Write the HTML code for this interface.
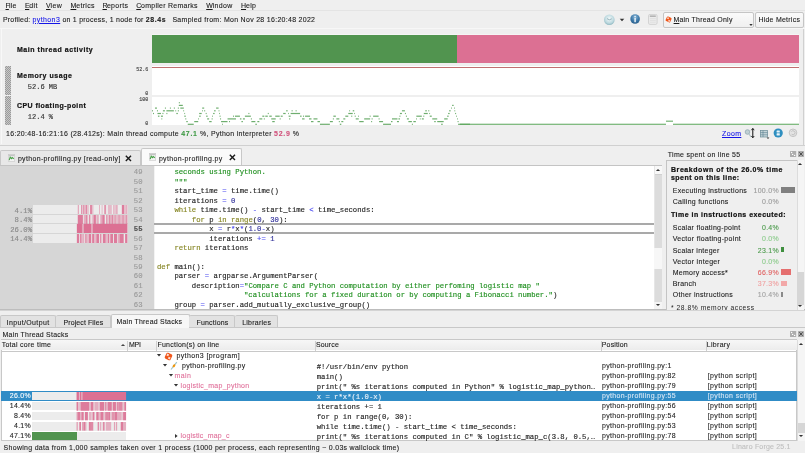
<!DOCTYPE html>
<html><head><meta charset="utf-8"><style>
html,body{margin:0;padding:0;width:805px;height:453px;overflow:hidden;background:#efefef;position:relative;font-family:'Liberation Sans', sans-serif}
div{font-variant-ligatures:none;text-decoration-thickness:0.7px;text-underline-offset:0.6px}
.m{-webkit-text-stroke:0.14px currentColor}
.s{-webkit-text-stroke:0.1px currentColor}
.b{-webkit-text-stroke:0.22px currentColor}
</style></head><body><div id="root" style="position:absolute;left:0;top:0;width:805px;height:453px;will-change:transform">
<div style="position:absolute;left:0px;top:10px;width:805px;height:1px;background:#e4e4e4;"></div>
<div class="s" style="position:absolute;left:5.50px;top:2.88px;font-family:'Liberation Sans', sans-serif;font-size:6.97px;line-height:6.97px;font-weight:400;color:#1a1a1a;white-space:pre;"><span style="text-decoration:underline;letter-spacing:-0.891px;">F</span><span style=";letter-spacing:0.292px;">ile</span></div>
<div class="s" style="position:absolute;left:25.00px;top:2.88px;font-family:'Liberation Sans', sans-serif;font-size:6.97px;line-height:6.97px;font-weight:400;color:#1a1a1a;white-space:pre;"><span style="text-decoration:underline;letter-spacing:-0.406px;">E</span><span style=";letter-spacing:0.464px;">dit</span></div>
<div class="s" style="position:absolute;left:46.00px;top:2.88px;font-family:'Liberation Sans', sans-serif;font-size:6.97px;line-height:6.97px;font-weight:400;color:#1a1a1a;white-space:pre;"><span style="text-decoration:underline;letter-spacing:-0.078px;">V</span><span style=";letter-spacing:0.339px;">iew</span></div>
<div class="s" style="position:absolute;left:70.50px;top:2.88px;font-family:'Liberation Sans', sans-serif;font-size:6.97px;line-height:6.97px;font-weight:400;color:#1a1a1a;white-space:pre;"><span style="text-decoration:underline;letter-spacing:-0.016px;">M</span><span style=";letter-spacing:0.315px;">etrics</span></div>
<div class="s" style="position:absolute;left:102.50px;top:2.88px;font-family:'Liberation Sans', sans-serif;font-size:6.97px;line-height:6.97px;font-weight:400;color:#1a1a1a;white-space:pre;"><span style="text-decoration:underline;letter-spacing:-0.672px;">R</span><span style=";letter-spacing:0.331px;">eports</span></div>
<div class="s" style="position:absolute;left:136.30px;top:2.88px;font-family:'Liberation Sans', sans-serif;font-size:6.97px;line-height:6.97px;font-weight:400;color:#1a1a1a;white-space:pre;"><span style="text-decoration:underline;letter-spacing:-0.359px;">C</span><span style=";letter-spacing:0.280px;">ompiler Remarks</span></div>
<div class="s" style="position:absolute;left:206.20px;top:2.88px;font-family:'Liberation Sans', sans-serif;font-size:6.97px;line-height:6.97px;font-weight:400;color:#1a1a1a;white-space:pre;"><span style="text-decoration:underline;letter-spacing:-0.109px;">W</span><span style=";letter-spacing:0.347px;">indow</span></div>
<div class="s" style="position:absolute;left:241.00px;top:2.88px;font-family:'Liberation Sans', sans-serif;font-size:6.97px;line-height:6.97px;font-weight:400;color:#1a1a1a;white-space:pre;"><span style="text-decoration:underline;">H</span><span style=";letter-spacing:0.312px;">elp</span></div>
<div class="s" style="position:absolute;left:3.00px;top:16.78px;font-family:'Liberation Sans', sans-serif;font-size:6.97px;line-height:6.97px;font-weight:400;color:#1a1a1a;white-space:pre;"><span style=";letter-spacing:0.197px;">Profiled: </span><span style="color:#1515e8;text-decoration:underline;letter-spacing:0.415px;">python3</span><span style=";letter-spacing:0.253px;"> on 1 process, 1 node for </span><span style="font-weight:700;letter-spacing:0.616px;">28.4s</span></div>
<div class="s" style="position:absolute;left:172.40px;top:16.78px;font-family:'Liberation Sans', sans-serif;font-size:6.97px;line-height:6.97px;font-weight:400;color:#1a1a1a;white-space:pre;"><span style=";letter-spacing:0.305px;">Sampled from: Mon Nov 28 16:20:48 2022</span></div>
<svg style="position:absolute;left:603px;top:13.5px" width="13" height="12"><defs><radialGradient id="cg" cx="50%" cy="40%" r="60%"><stop offset="0" stop-color="#f4fafb"/><stop offset="0.7" stop-color="#bcd8de"/><stop offset="1" stop-color="#8ab4be"/></radialGradient></defs><circle cx="6.3" cy="5.8" r="5.3" fill="url(#cg)"/><path d="M6.3,5.8 L4,4.6 M6.3,5.8 L8.8,4.8" stroke="#7a9aa4" stroke-width="0.7" fill="none"/></svg>
<svg style="position:absolute;left:617.6px;top:16.6px" width="8" height="6"><polygon points="1.7000000000000002,1.8 6.3,1.8 4,4.2" fill="#333"/></svg>
<svg style="position:absolute;left:629.5px;top:14px" width="11" height="11"><defs><radialGradient id="ig" cx="50%" cy="30%" r="70%"><stop offset="0" stop-color="#8cb8d8"/><stop offset="0.6" stop-color="#3c78a8"/><stop offset="1" stop-color="#2a5f8c"/></radialGradient></defs><circle cx="5.1" cy="5" r="4.8" fill="url(#ig)"/><circle cx="5.1" cy="2.6" r="0.8" fill="#f4f8fb"/><rect x="4.4" y="4" width="1.4" height="4.2" fill="#f4f8fb"/></svg>
<svg style="position:absolute;left:648px;top:14px" width="10" height="11"><rect x="0.5" y="0.4" width="8.6" height="10" rx="1.4" fill="#ececec" stroke="#c8c8c8" stroke-width="0.7"/><rect x="1.8" y="1.4" width="6" height="1.6" fill="#b4b4b4"/><path d="M1.8,4.6 L7.8,4.6 M1.8,6.4 L7.8,6.4 M1.8,8.2 L7.8,8.2" stroke="#d6d6d6" stroke-width="0.6"/></svg>
<div style="position:absolute;left:662.5px;top:12px;width:91px;height:16.3px;box-sizing:border-box;border:1px solid #c5c5c5;border-radius:2px;background:linear-gradient(#fafafa,#f0f0f0)"></div>
<svg style="position:absolute;left:664.6px;top:16.4px" width="8" height="8"><g transform="rotate(25 3.6 3.6)"><rect x="1" y="1" width="5" height="5" rx="1" fill="#f0561a"/><rect x="1.7" y="1.8" width="1.6" height="1.6" fill="#fbe0d6"/><rect x="3.8" y="3.7" width="1.6" height="1.6" fill="#fbe0d6"/></g></svg>
<div class="s" style="position:absolute;left:673.60px;top:17.38px;font-family:'Liberation Sans', sans-serif;font-size:6.97px;line-height:6.97px;font-weight:400;color:#1a1a1a;white-space:pre;"><span style="text-decoration:underline;letter-spacing:-0.016px;">M</span><span style=";letter-spacing:0.253px;">ain Thread Only</span></div>
<svg style="position:absolute;left:747.3px;top:22.2px" width="8" height="6"><polygon points="2.3,2.1 5.7,2.1 4,3.9" fill="#333"/></svg>
<div style="position:absolute;left:754.7px;top:12px;width:49.3px;height:16.3px;box-sizing:border-box;border:1px solid #c5c5c5;border-radius:2px;background:linear-gradient(#fafafa,#f0f0f0)"></div>
<div class="s" style="position:absolute;left:758.40px;top:17.38px;font-family:'Liberation Sans', sans-serif;font-size:6.97px;line-height:6.97px;font-weight:400;color:#1a1a1a;white-space:pre;"><span style=";letter-spacing:0.251px;">Hide Metrics</span></div>
<div style="position:absolute;left:0px;top:28px;width:805px;height:1px;background:#f7f7f7;"></div>
<div style="position:absolute;left:803px;top:29px;width:1px;height:116px;background:#d0d0d0;"></div>
<div style="position:absolute;left:1px;top:29px;width:1px;height:115px;background:#f8f8f8;"></div>
<div style="position:absolute;left:0px;top:144.6px;width:805px;height:1.2px;background:#d0d0d0;"></div>
<div class="b" style="position:absolute;left:17.00px;top:46.58px;font-family:'Liberation Sans', sans-serif;font-size:6.97px;line-height:6.97px;font-weight:700;color:#141414;white-space:pre;"><span style=";letter-spacing:0.562px;">Main thread activity</span></div>
<div style="position:absolute;left:152px;top:34px;width:647px;height:1px;background:#f5f5f5;"></div>
<div style="position:absolute;left:152px;top:35px;width:305px;height:28px;background:#51944f;"></div>
<div style="position:absolute;left:457px;top:35px;width:342px;height:28px;background:#dc7093;"></div>
<div style="position:absolute;left:5.4px;top:65.8px;width:5.6px;height:29px;background:#aaa;background:repeating-linear-gradient(45deg,#9a9a9a 0 0.7px,#c8c8c8 0.7px 1.4px)"></div>
<div style="position:absolute;left:5.4px;top:96.3px;width:5.6px;height:28.8px;background:#aaa;background:repeating-linear-gradient(45deg,#9a9a9a 0 0.7px,#c8c8c8 0.7px 1.4px)"></div>
<div class="b" style="position:absolute;left:17.00px;top:72.88px;font-family:'Liberation Sans', sans-serif;font-size:6.97px;line-height:6.97px;font-weight:700;color:#141414;white-space:pre;"><span style=";letter-spacing:0.552px;">Memory usage</span></div>
<div class="m" style="position:absolute;left:27.80px;top:84.38px;font-family:'Liberation Mono', monospace;font-size:7.00px;line-height:7.00px;font-weight:400;color:#333;white-space:pre;">52.6 MB</div>
<div class="b" style="position:absolute;left:17.00px;top:102.68px;font-family:'Liberation Sans', sans-serif;font-size:6.97px;line-height:6.97px;font-weight:700;color:#141414;white-space:pre;"><span style=";letter-spacing:0.447px;">CPU floating-point</span></div>
<div class="m" style="position:absolute;left:27.80px;top:114.18px;font-family:'Liberation Mono', monospace;font-size:7.00px;line-height:7.00px;font-weight:400;color:#333;white-space:pre;">12.4 %</div>
<div style="position:absolute;left:152px;top:66px;width:647px;height:29px;background:#fff;"></div>
<div style="position:absolute;left:152px;top:67px;width:647px;height:1px;background:#c07070;"></div>
<div style="position:absolute;left:152px;top:97px;width:647px;height:28px;background:#fff;"></div>
<div class="m" style="position:absolute;right:656.70px;top:68.00px;font-family:'Liberation Mono', monospace;font-size:5.00px;line-height:5.00px;font-weight:400;color:#444;white-space:pre;">52.6</div>
<div class="m" style="position:absolute;right:656.70px;top:91.50px;font-family:'Liberation Mono', monospace;font-size:5.00px;line-height:5.00px;font-weight:400;color:#444;white-space:pre;">0</div>
<div class="m" style="position:absolute;right:656.70px;top:98.20px;font-family:'Liberation Mono', monospace;font-size:5.00px;line-height:5.00px;font-weight:400;color:#444;white-space:pre;">100</div>
<div class="m" style="position:absolute;right:656.70px;top:121.80px;font-family:'Liberation Mono', monospace;font-size:5.00px;line-height:5.00px;font-weight:400;color:#444;white-space:pre;">0</div>
<svg style="position:absolute;left:0;top:0" width="805" height="453"><rect x="178.83" y="102.10" width="0.99" height="1.2" fill="#4a9a4a" fill-opacity="0.8"/><rect x="178.83" y="104.80" width="3.98" height="1.2" fill="#4a9a4a" fill-opacity="0.8"/><rect x="154.97" y="107.50" width="1.99" height="1.2" fill="#4a9a4a" fill-opacity="0.8"/><rect x="164.91" y="107.50" width="0.99" height="1.2" fill="#4a9a4a" fill-opacity="0.8"/><rect x="169.88" y="107.50" width="0.99" height="1.2" fill="#4a9a4a" fill-opacity="0.8"/><rect x="173.86" y="107.50" width="0.99" height="1.2" fill="#4a9a4a" fill-opacity="0.8"/><rect x="177.83" y="107.50" width="0.99" height="1.2" fill="#4a9a4a" fill-opacity="0.8"/><rect x="180.32" y="107.50" width="3.48" height="1.2" fill="#4a9a4a" fill-opacity="0.8"/><rect x="202.19" y="107.50" width="1.99" height="1.2" fill="#4a9a4a" fill-opacity="0.8"/><rect x="216.10" y="107.50" width="2.49" height="1.2" fill="#4a9a4a" fill-opacity="0.8"/><rect x="151.99" y="110.20" width="0.99" height="1.2" fill="#4a9a4a" fill-opacity="0.8"/><rect x="156.96" y="110.20" width="0.99" height="1.2" fill="#4a9a4a" fill-opacity="0.8"/><rect x="162.92" y="110.20" width="1.99" height="1.2" fill="#4a9a4a" fill-opacity="0.8"/><rect x="166.40" y="110.20" width="7.46" height="1.2" fill="#4a9a4a" fill-opacity="0.8"/><rect x="175.35" y="110.20" width="0.80" height="1.2" fill="#4a9a4a" fill-opacity="0.8"/><rect x="177.83" y="110.20" width="0.99" height="1.2" fill="#4a9a4a" fill-opacity="0.8"/><rect x="183.30" y="110.20" width="0.80" height="1.2" fill="#4a9a4a" fill-opacity="0.8"/><rect x="202.19" y="110.20" width="0.80" height="1.2" fill="#4a9a4a" fill-opacity="0.8"/><rect x="204.17" y="110.20" width="0.99" height="1.2" fill="#4a9a4a" fill-opacity="0.8"/><rect x="214.12" y="110.20" width="1.49" height="1.2" fill="#4a9a4a" fill-opacity="0.8"/><rect x="218.59" y="110.20" width="0.80" height="1.2" fill="#4a9a4a" fill-opacity="0.8"/><rect x="152.98" y="112.90" width="0.99" height="1.2" fill="#4a9a4a" fill-opacity="0.8"/><rect x="157.46" y="112.90" width="3.48" height="1.2" fill="#4a9a4a" fill-opacity="0.8"/><rect x="162.43" y="112.90" width="0.99" height="1.2" fill="#4a9a4a" fill-opacity="0.8"/><rect x="166.40" y="112.90" width="0.99" height="1.2" fill="#4a9a4a" fill-opacity="0.8"/><rect x="176.34" y="112.90" width="1.49" height="1.2" fill="#4a9a4a" fill-opacity="0.8"/><rect x="184.29" y="112.90" width="0.80" height="1.2" fill="#4a9a4a" fill-opacity="0.8"/><rect x="199.20" y="112.90" width="2.49" height="1.2" fill="#4a9a4a" fill-opacity="0.8"/><rect x="205.67" y="112.90" width="0.99" height="1.2" fill="#4a9a4a" fill-opacity="0.8"/><rect x="213.12" y="112.90" width="1.49" height="1.2" fill="#4a9a4a" fill-opacity="0.8"/><rect x="219.09" y="112.90" width="0.80" height="1.2" fill="#4a9a4a" fill-opacity="0.8"/><rect x="157.95" y="115.60" width="1.49" height="1.2" fill="#4a9a4a" fill-opacity="0.8"/><rect x="160.93" y="115.60" width="1.99" height="1.2" fill="#4a9a4a" fill-opacity="0.8"/><rect x="184.29" y="115.60" width="1.49" height="1.2" fill="#4a9a4a" fill-opacity="0.8"/><rect x="199.20" y="115.60" width="1.49" height="1.2" fill="#4a9a4a" fill-opacity="0.8"/><rect x="206.16" y="115.60" width="1.49" height="1.2" fill="#4a9a4a" fill-opacity="0.8"/><rect x="212.13" y="115.60" width="0.80" height="1.2" fill="#4a9a4a" fill-opacity="0.8"/><rect x="219.58" y="115.60" width="0.99" height="1.2" fill="#4a9a4a" fill-opacity="0.8"/><rect x="161.43" y="118.30" width="0.80" height="1.2" fill="#4a9a4a" fill-opacity="0.8"/><rect x="185.29" y="118.30" width="0.99" height="1.2" fill="#4a9a4a" fill-opacity="0.8"/><rect x="198.21" y="118.30" width="0.80" height="1.2" fill="#4a9a4a" fill-opacity="0.8"/><rect x="207.16" y="118.30" width="1.99" height="1.2" fill="#4a9a4a" fill-opacity="0.8"/><rect x="211.63" y="118.30" width="0.99" height="1.2" fill="#4a9a4a" fill-opacity="0.8"/><rect x="220.08" y="118.30" width="0.99" height="1.2" fill="#4a9a4a" fill-opacity="0.8"/><rect x="227.53" y="118.30" width="2.49" height="1.2" fill="#4a9a4a" fill-opacity="0.8"/><rect x="186.28" y="121.00" width="1.49" height="1.2" fill="#4a9a4a" fill-opacity="0.8"/><rect x="194.23" y="121.00" width="3.98" height="1.2" fill="#4a9a4a" fill-opacity="0.8"/><rect x="209.15" y="121.00" width="2.49" height="1.2" fill="#4a9a4a" fill-opacity="0.8"/><rect x="221.07" y="121.00" width="6.46" height="1.2" fill="#4a9a4a" fill-opacity="0.8"/><rect x="229.03" y="121.00" width="0.99" height="1.2" fill="#4a9a4a" fill-opacity="0.8"/><rect x="187.77" y="123.70" width="5.96" height="1.2" fill="#4a9a4a" fill-opacity="0.8"/><rect x="222.07" y="123.70" width="0.80" height="1.2" fill="#4a9a4a" fill-opacity="0.8"/><rect x="286.16" y="110.20" width="1.49" height="1.2" fill="#4a9a4a" fill-opacity="0.8"/><rect x="291.63" y="110.20" width="0.99" height="1.2" fill="#4a9a4a" fill-opacity="0.8"/><rect x="295.61" y="110.20" width="0.99" height="1.2" fill="#4a9a4a" fill-opacity="0.8"/><rect x="248.39" y="112.90" width="0.99" height="1.2" fill="#4a9a4a" fill-opacity="0.8"/><rect x="267.77" y="112.90" width="0.99" height="1.2" fill="#4a9a4a" fill-opacity="0.8"/><rect x="283.18" y="112.90" width="2.49" height="1.2" fill="#4a9a4a" fill-opacity="0.8"/><rect x="288.15" y="112.90" width="0.80" height="1.2" fill="#4a9a4a" fill-opacity="0.8"/><rect x="290.64" y="112.90" width="9.44" height="1.2" fill="#4a9a4a" fill-opacity="0.8"/><rect x="232.98" y="115.60" width="0.99" height="1.2" fill="#4a9a4a" fill-opacity="0.8"/><rect x="234.97" y="115.60" width="4.97" height="1.2" fill="#4a9a4a" fill-opacity="0.8"/><rect x="244.91" y="115.60" width="5.96" height="1.2" fill="#4a9a4a" fill-opacity="0.8"/><rect x="262.31" y="115.60" width="1.99" height="1.2" fill="#4a9a4a" fill-opacity="0.8"/><rect x="265.29" y="115.60" width="2.49" height="1.2" fill="#4a9a4a" fill-opacity="0.8"/><rect x="269.26" y="115.60" width="2.49" height="1.2" fill="#4a9a4a" fill-opacity="0.8"/><rect x="275.23" y="115.60" width="4.47" height="1.2" fill="#4a9a4a" fill-opacity="0.8"/><rect x="280.70" y="115.60" width="1.99" height="1.2" fill="#4a9a4a" fill-opacity="0.8"/><rect x="288.65" y="115.60" width="1.99" height="1.2" fill="#4a9a4a" fill-opacity="0.8"/><rect x="300.08" y="115.60" width="1.49" height="1.2" fill="#4a9a4a" fill-opacity="0.8"/><rect x="303.06" y="115.60" width="0.99" height="1.2" fill="#4a9a4a" fill-opacity="0.8"/><rect x="305.05" y="115.60" width="4.97" height="1.2" fill="#4a9a4a" fill-opacity="0.8"/><rect x="230.00" y="118.30" width="5.96" height="1.2" fill="#4a9a4a" fill-opacity="0.8"/><rect x="239.94" y="118.30" width="1.49" height="1.2" fill="#4a9a4a" fill-opacity="0.8"/><rect x="242.92" y="118.30" width="1.99" height="1.2" fill="#4a9a4a" fill-opacity="0.8"/><rect x="250.87" y="118.30" width="0.99" height="1.2" fill="#4a9a4a" fill-opacity="0.8"/><rect x="259.32" y="118.30" width="2.98" height="1.2" fill="#4a9a4a" fill-opacity="0.8"/><rect x="263.80" y="118.30" width="0.99" height="1.2" fill="#4a9a4a" fill-opacity="0.8"/><rect x="271.25" y="118.30" width="4.47" height="1.2" fill="#4a9a4a" fill-opacity="0.8"/><rect x="279.70" y="118.30" width="0.99" height="1.2" fill="#4a9a4a" fill-opacity="0.8"/><rect x="289.15" y="118.30" width="0.99" height="1.2" fill="#4a9a4a" fill-opacity="0.8"/><rect x="302.07" y="118.30" width="2.49" height="1.2" fill="#4a9a4a" fill-opacity="0.8"/><rect x="309.03" y="118.30" width="0.99" height="1.2" fill="#4a9a4a" fill-opacity="0.8"/><rect x="241.43" y="121.00" width="1.49" height="1.2" fill="#4a9a4a" fill-opacity="0.8"/><rect x="251.37" y="121.00" width="3.98" height="1.2" fill="#4a9a4a" fill-opacity="0.8"/><rect x="257.34" y="121.00" width="1.99" height="1.2" fill="#4a9a4a" fill-opacity="0.8"/><rect x="272.25" y="121.00" width="2.49" height="1.2" fill="#4a9a4a" fill-opacity="0.8"/><rect x="255.35" y="123.70" width="1.49" height="1.2" fill="#4a9a4a" fill-opacity="0.8"/><rect x="349.26" y="110.20" width="0.80" height="1.2" fill="#4a9a4a" fill-opacity="0.8"/><rect x="352.74" y="110.20" width="1.49" height="1.2" fill="#4a9a4a" fill-opacity="0.8"/><rect x="348.27" y="112.90" width="4.47" height="1.2" fill="#4a9a4a" fill-opacity="0.8"/><rect x="354.23" y="112.90" width="0.80" height="1.2" fill="#4a9a4a" fill-opacity="0.8"/><rect x="333.36" y="115.60" width="2.49" height="1.2" fill="#4a9a4a" fill-opacity="0.8"/><rect x="345.29" y="115.60" width="2.98" height="1.2" fill="#4a9a4a" fill-opacity="0.8"/><rect x="351.25" y="115.60" width="0.99" height="1.2" fill="#4a9a4a" fill-opacity="0.8"/><rect x="354.73" y="115.60" width="0.99" height="1.2" fill="#4a9a4a" fill-opacity="0.8"/><rect x="358.21" y="115.60" width="0.80" height="1.2" fill="#4a9a4a" fill-opacity="0.8"/><rect x="369.64" y="115.60" width="0.99" height="1.2" fill="#4a9a4a" fill-opacity="0.8"/><rect x="373.12" y="115.60" width="5.47" height="1.2" fill="#4a9a4a" fill-opacity="0.8"/><rect x="310.00" y="118.30" width="1.49" height="1.2" fill="#4a9a4a" fill-opacity="0.8"/><rect x="313.48" y="118.30" width="3.98" height="1.2" fill="#4a9a4a" fill-opacity="0.8"/><rect x="332.86" y="118.30" width="0.99" height="1.2" fill="#4a9a4a" fill-opacity="0.8"/><rect x="336.34" y="118.30" width="2.98" height="1.2" fill="#4a9a4a" fill-opacity="0.8"/><rect x="343.30" y="118.30" width="1.99" height="1.2" fill="#4a9a4a" fill-opacity="0.8"/><rect x="355.73" y="118.30" width="2.98" height="1.2" fill="#4a9a4a" fill-opacity="0.8"/><rect x="364.17" y="118.30" width="5.96" height="1.2" fill="#4a9a4a" fill-opacity="0.8"/><rect x="371.63" y="118.30" width="0.99" height="1.2" fill="#4a9a4a" fill-opacity="0.8"/><rect x="378.59" y="118.30" width="0.99" height="1.2" fill="#4a9a4a" fill-opacity="0.8"/><rect x="310.99" y="121.00" width="2.49" height="1.2" fill="#4a9a4a" fill-opacity="0.8"/><rect x="317.46" y="121.00" width="2.49" height="1.2" fill="#4a9a4a" fill-opacity="0.8"/><rect x="329.88" y="121.00" width="2.98" height="1.2" fill="#4a9a4a" fill-opacity="0.8"/><rect x="338.83" y="121.00" width="0.99" height="1.2" fill="#4a9a4a" fill-opacity="0.8"/><rect x="341.31" y="121.00" width="1.99" height="1.2" fill="#4a9a4a" fill-opacity="0.8"/><rect x="359.20" y="121.00" width="4.47" height="1.2" fill="#4a9a4a" fill-opacity="0.8"/><rect x="371.13" y="121.00" width="0.99" height="1.2" fill="#4a9a4a" fill-opacity="0.8"/><rect x="379.09" y="121.00" width="3.98" height="1.2" fill="#4a9a4a" fill-opacity="0.8"/><rect x="319.94" y="123.70" width="9.94" height="1.2" fill="#4a9a4a" fill-opacity="0.8"/><rect x="339.82" y="123.70" width="1.49" height="1.2" fill="#4a9a4a" fill-opacity="0.8"/><rect x="383.06" y="123.70" width="6.96" height="1.2" fill="#4a9a4a" fill-opacity="0.8"/><rect x="452.13" y="104.80" width="1.49" height="1.2" fill="#4a9a4a" fill-opacity="0.8"/><rect x="451.13" y="107.50" width="0.80" height="1.2" fill="#4a9a4a" fill-opacity="0.8"/><rect x="454.12" y="107.50" width="0.80" height="1.2" fill="#4a9a4a" fill-opacity="0.8"/><rect x="401.93" y="110.20" width="2.98" height="1.2" fill="#4a9a4a" fill-opacity="0.8"/><rect x="425.29" y="110.20" width="1.49" height="1.2" fill="#4a9a4a" fill-opacity="0.8"/><rect x="428.27" y="110.20" width="0.99" height="1.2" fill="#4a9a4a" fill-opacity="0.8"/><rect x="449.15" y="110.20" width="1.49" height="1.2" fill="#4a9a4a" fill-opacity="0.8"/><rect x="454.41" y="110.20" width="0.80" height="1.2" fill="#4a9a4a" fill-opacity="0.8"/><rect x="399.94" y="112.90" width="1.99" height="1.2" fill="#4a9a4a" fill-opacity="0.8"/><rect x="404.91" y="112.90" width="0.99" height="1.2" fill="#4a9a4a" fill-opacity="0.8"/><rect x="423.80" y="112.90" width="3.98" height="1.2" fill="#4a9a4a" fill-opacity="0.8"/><rect x="429.26" y="112.90" width="0.80" height="1.2" fill="#4a9a4a" fill-opacity="0.8"/><rect x="448.15" y="112.90" width="1.49" height="1.2" fill="#4a9a4a" fill-opacity="0.8"/><rect x="455.11" y="112.90" width="0.99" height="1.2" fill="#4a9a4a" fill-opacity="0.8"/><rect x="399.44" y="115.60" width="0.99" height="1.2" fill="#4a9a4a" fill-opacity="0.8"/><rect x="405.90" y="115.60" width="0.99" height="1.2" fill="#4a9a4a" fill-opacity="0.8"/><rect x="416.34" y="115.60" width="5.47" height="1.2" fill="#4a9a4a" fill-opacity="0.8"/><rect x="423.30" y="115.60" width="0.99" height="1.2" fill="#4a9a4a" fill-opacity="0.8"/><rect x="429.76" y="115.60" width="1.99" height="1.2" fill="#4a9a4a" fill-opacity="0.8"/><rect x="447.16" y="115.60" width="1.49" height="1.2" fill="#4a9a4a" fill-opacity="0.8"/><rect x="456.10" y="115.60" width="0.80" height="1.2" fill="#4a9a4a" fill-opacity="0.8"/><rect x="391.99" y="118.30" width="5.47" height="1.2" fill="#4a9a4a" fill-opacity="0.8"/><rect x="398.45" y="118.30" width="1.49" height="1.2" fill="#4a9a4a" fill-opacity="0.8"/><rect x="406.90" y="118.30" width="1.99" height="1.2" fill="#4a9a4a" fill-opacity="0.8"/><rect x="416.04" y="118.30" width="0.80" height="1.2" fill="#4a9a4a" fill-opacity="0.8"/><rect x="419.82" y="118.30" width="0.80" height="1.2" fill="#4a9a4a" fill-opacity="0.8"/><rect x="421.81" y="118.30" width="1.99" height="1.2" fill="#4a9a4a" fill-opacity="0.8"/><rect x="432.25" y="118.30" width="4.97" height="1.2" fill="#4a9a4a" fill-opacity="0.8"/><rect x="444.17" y="118.30" width="3.48" height="1.2" fill="#4a9a4a" fill-opacity="0.8"/><rect x="457.10" y="118.30" width="0.80" height="1.2" fill="#4a9a4a" fill-opacity="0.8"/><rect x="390.99" y="121.00" width="1.49" height="1.2" fill="#4a9a4a" fill-opacity="0.8"/><rect x="396.96" y="121.00" width="1.99" height="1.2" fill="#4a9a4a" fill-opacity="0.8"/><rect x="408.39" y="121.00" width="3.48" height="1.2" fill="#4a9a4a" fill-opacity="0.8"/><rect x="413.36" y="121.00" width="2.49" height="1.2" fill="#4a9a4a" fill-opacity="0.8"/><rect x="434.23" y="121.00" width="1.49" height="1.2" fill="#4a9a4a" fill-opacity="0.8"/><rect x="437.22" y="121.00" width="6.46" height="1.2" fill="#4a9a4a" fill-opacity="0.8"/><rect x="457.59" y="121.00" width="0.99" height="1.2" fill="#4a9a4a" fill-opacity="0.8"/><rect x="390.00" y="123.70" width="0.99" height="1.2" fill="#4a9a4a" fill-opacity="0.8"/><rect x="411.87" y="123.70" width="0.99" height="1.2" fill="#4a9a4a" fill-opacity="0.8"/><rect x="441.19" y="123.70" width="1.49" height="1.2" fill="#4a9a4a" fill-opacity="0.8"/><rect x="458.09" y="123.70" width="11.93" height="1.2" fill="#4a9a4a" fill-opacity="0.8"/><rect x="460" y="123.7" width="206" height="1.2" fill="#5aa65a" fill-opacity="0.85"/><rect x="673" y="123.7" width="126" height="1.2" fill="#5aa65a" fill-opacity="0.85"/><rect x="666" y="120.6" width="7" height="1.2" fill="#5aa65a" fill-opacity="0.85"/></svg>
<div class="s" style="position:absolute;left:6.00px;top:130.88px;font-family:'Liberation Sans', sans-serif;font-size:6.97px;line-height:6.97px;font-weight:400;color:#1a1a1a;white-space:pre;"><span style=";letter-spacing:0.326px;">16:20:48-16:21:16 (28.412s): Main thread compute </span><span style="color:#3f9a45;font-weight:700;letter-spacing:0.738px;">47.1</span><span style=";letter-spacing:0.305px;"> %, Python interpreter </span><span style="color:#d0507a;font-weight:700;letter-spacing:0.738px;">52.9</span><span style=";letter-spacing:0.180px;"> %</span></div>
<div class="s" style="position:absolute;left:722.00px;top:131.28px;font-family:'Liberation Sans', sans-serif;font-size:6.97px;line-height:6.97px;font-weight:400;color:#1515e8;white-space:pre;text-decoration:underline"><span style=";letter-spacing:0.375px;">Zoom</span></div>
<svg style="position:absolute;left:744px;top:128px" width="11" height="11"><circle cx="3.5" cy="4" r="2.3" fill="#c0d0d4" stroke="#90a8b0" stroke-width="0.8"/><path d="M5,6 L7,9" stroke="#b0c0c4" stroke-width="1.2"/><path d="M8.8,0.6 L8.8,9.6" stroke="#111" stroke-width="1"/><path d="M7.4,2.2 L8.8,0.4 L10.2,2.2 M7.4,8 L8.8,9.8 L10.2,8" fill="none" stroke="#111" stroke-width="0.9"/></svg>
<svg style="position:absolute;left:759.5px;top:129.5px" width="10" height="9"><rect x="0.5" y="0.5" width="7" height="6.5" fill="#c4d4d8" stroke="#6a8c98" stroke-width="0.7"/><path d="M0.5,2.6 L7.5,2.6 M0.5,4.8 L7.5,4.8 M3,0.5 L3,7" stroke="#5a8090" stroke-width="0.6"/><polygon points="6.6,7.4 9.4,7.4 8,8.9" fill="#333"/></svg>
<svg style="position:absolute;left:773px;top:127.8px" width="11" height="11"><circle cx="5.2" cy="5" r="4.6" fill="#2f8fc0"/><rect x="3.6" y="2.6" width="3.2" height="1.9" rx="0.5" fill="#e8f4fa"/><rect x="3.6" y="5.2" width="3.2" height="2.3" rx="0.5" fill="#e8f4fa"/></svg>
<svg style="position:absolute;left:787.5px;top:128px" width="10" height="10"><circle cx="5" cy="4.8" r="3.8" fill="#e4e4e4" stroke="#c0c0c0" stroke-width="0.9"/><path d="M3.4,3.6 A2,2 0 1 1 3.6,6.2" fill="none" stroke="#b8b8b8" stroke-width="0.8"/></svg>
<div style="position:absolute;left:0;top:150px;width:140.5px;height:16px;box-sizing:border-box;border:1px solid #c8c8c8;border-bottom:none;background:#e8e8e8;border-radius:2px 2px 0 0"></div>
<div style="position:absolute;left:141.3px;top:148px;width:101.2px;height:18px;box-sizing:border-box;border:1px solid #c8c8c8;border-bottom:none;background:#fafafa;border-radius:2px 2px 0 0"></div>
<div class="s" style="position:absolute;left:17.90px;top:156.38px;font-family:'Liberation Sans', sans-serif;font-size:6.97px;line-height:6.97px;font-weight:400;color:#1a1a1a;white-space:pre;"><span style=";letter-spacing:0.354px;">python-profiling.py [read-only]</span></div>
<div class="s" style="position:absolute;left:158.90px;top:155.58px;font-family:'Liberation Sans', sans-serif;font-size:6.97px;line-height:6.97px;font-weight:400;color:#1a1a1a;white-space:pre;"><span style=";letter-spacing:0.351px;">python-profiling.py</span></div>
<svg style="position:absolute;left:8px;top:153.7px" width="7" height="8"><rect x="0.3" y="0.3" width="6.4" height="7.2" fill="#f4f4f4" stroke="#c8c8c8" stroke-width="0.6"/><rect x="0.6" y="0.6" width="5.8" height="1.6" fill="#c4c4c4"/><path d="M1.2,6.2 L2.2,3.2 L3.4,4.6 L4.2,3.6 L5.8,4.8" fill="none" stroke="#48a048" stroke-width="1.1"/></svg>
<svg style="position:absolute;left:148.5px;top:153px" width="7" height="8"><rect x="0.3" y="0.3" width="6.4" height="7.2" fill="#f4f4f4" stroke="#c8c8c8" stroke-width="0.6"/><rect x="0.6" y="0.6" width="5.8" height="1.6" fill="#c4c4c4"/><path d="M1.2,6.2 L2.2,3.2 L3.4,4.6 L4.2,3.6 L5.8,4.8" fill="none" stroke="#48a048" stroke-width="1.1"/></svg>
<svg style="position:absolute;left:124.6px;top:154.8px" width="7" height="7"><path d="M0.8,0.8 L6,6 M6,0.8 L0.8,6" stroke="#1a1a1a" stroke-width="1.4"/></svg>
<svg style="position:absolute;left:229px;top:154.3px" width="7" height="7"><path d="M0.8,0.8 L6,6 M6,0.8 L0.8,6" stroke="#1a1a1a" stroke-width="1.4"/></svg>
<div style="position:absolute;left:0px;top:166px;width:662px;height:143px;background:#d6d6d6;"></div>
<div style="position:absolute;left:0px;top:165px;width:662px;height:1px;background:#c4c4c4;"></div>
<div style="position:absolute;left:154px;top:166px;width:500.5px;height:142.5px;background:#fff;"></div>
<div style="position:absolute;left:154px;top:166px;width:1px;height:142.5px;background:#f3f3f3;"></div>
<div style="position:absolute;left:0px;top:308.5px;width:805px;height:1.5px;background:#bdbdbd;"></div>
<div style="position:absolute;left:33px;top:205px;width:95px;height:9.1px;background:#ececec;"></div>
<svg style="position:absolute;left:0;top:205px;overflow:visible" width="805" height="9"><rect x="77.78" y="0" width="1.11" height="9" fill="#dc7093" fill-opacity="0.6"/><rect x="81.03" y="0" width="1.39" height="9" fill="#dc7093" fill-opacity="0.7"/><rect x="83.16" y="0" width="1.11" height="9" fill="#dc7093" fill-opacity="0.8"/><rect x="84.28" y="0" width="1.39" height="9" fill="#dc7093" fill-opacity="0.4"/><rect x="85.67" y="0" width="1.39" height="9" fill="#dc7093" fill-opacity="0.8"/><rect x="87.06" y="0" width="1.86" height="9" fill="#dc7093" fill-opacity="0.3"/><rect x="90.03" y="0" width="2.13" height="9" fill="#dc7093" fill-opacity="0.8"/><rect x="92.16" y="0" width="1.39" height="9" fill="#dc7093" fill-opacity="0.3"/><rect x="99.12" y="0" width="0.74" height="9" fill="#dc7093" fill-opacity="0.6"/><rect x="101.44" y="0" width="1.39" height="9" fill="#dc7093" fill-opacity="0.3"/><rect x="104.22" y="0" width="1.86" height="9" fill="#dc7093" fill-opacity="0.7"/><rect x="107.93" y="0" width="2.78" height="9" fill="#dc7093" fill-opacity="0.4"/><rect x="110.71" y="0" width="0.93" height="9" fill="#dc7093" fill-opacity="0.5"/><rect x="113.03" y="0" width="1.39" height="9" fill="#dc7093" fill-opacity="0.4"/><rect x="114.42" y="0" width="1.39" height="9" fill="#dc7093" fill-opacity="0.3"/><rect x="115.82" y="0" width="1.86" height="9" fill="#dc7093" fill-opacity="0.5"/><rect x="121.85" y="0" width="2.32" height="9" fill="#dc7093" fill-opacity="0.9"/><rect x="124.17" y="0" width="1.39" height="9" fill="#dc7093" fill-opacity="0.3"/><rect x="125.56" y="0" width="1.86" height="9" fill="#dc7093" fill-opacity="0.5"/></svg>
<div class="m" style="position:absolute;right:773.00px;top:207.77px;font-family:'Liberation Mono', monospace;font-size:7.25px;line-height:7.25px;font-weight:400;color:#8a8a8a;white-space:pre;">4.1%</div>
<div style="position:absolute;left:33px;top:214.8px;width:95px;height:8.5px;background:#ececec;"></div>
<svg style="position:absolute;left:0;top:214.8px;overflow:visible" width="805" height="9"><rect x="77.78" y="0" width="5.10" height="9" fill="#dc7093" fill-opacity="0.9"/><rect x="83.81" y="0" width="1.86" height="9" fill="#dc7093" fill-opacity="0.5"/><rect x="85.67" y="0" width="1.86" height="9" fill="#dc7093" fill-opacity="0.8"/><rect x="88.91" y="0" width="0.93" height="9" fill="#dc7093" fill-opacity="0.9"/><rect x="89.84" y="0" width="1.39" height="9" fill="#dc7093" fill-opacity="0.3"/><rect x="92.16" y="0" width="1.39" height="9" fill="#dc7093" fill-opacity="0.4"/><rect x="93.55" y="0" width="2.32" height="9" fill="#dc7093" fill-opacity="0.9"/><rect x="95.87" y="0" width="1.39" height="9" fill="#dc7093" fill-opacity="0.3"/><rect x="97.26" y="0" width="1.39" height="9" fill="#dc7093" fill-opacity="0.6"/><rect x="100.05" y="0" width="1.39" height="9" fill="#dc7093" fill-opacity="0.4"/><rect x="101.44" y="0" width="1.39" height="9" fill="#dc7093" fill-opacity="0.8"/><rect x="102.83" y="0" width="1.86" height="9" fill="#dc7093" fill-opacity="0.9"/><rect x="106.08" y="0" width="1.39" height="9" fill="#dc7093" fill-opacity="0.7"/><rect x="107.47" y="0" width="1.39" height="9" fill="#dc7093" fill-opacity="0.3"/><rect x="108.86" y="0" width="1.39" height="9" fill="#dc7093" fill-opacity="0.8"/><rect x="110.25" y="0" width="1.39" height="9" fill="#dc7093" fill-opacity="0.5"/><rect x="111.64" y="0" width="1.39" height="9" fill="#dc7093" fill-opacity="0.8"/><rect x="113.03" y="0" width="1.39" height="9" fill="#dc7093" fill-opacity="0.4"/><rect x="114.42" y="0" width="1.39" height="9" fill="#dc7093" fill-opacity="0.7"/><rect x="115.82" y="0" width="2.32" height="9" fill="#dc7093" fill-opacity="0.4"/><rect x="118.14" y="0" width="2.32" height="9" fill="#dc7093" fill-opacity="0.6"/><rect x="120.45" y="0" width="1.86" height="9" fill="#dc7093" fill-opacity="0.4"/><rect x="122.31" y="0" width="1.39" height="9" fill="#dc7093" fill-opacity="0.8"/><rect x="123.70" y="0" width="1.86" height="9" fill="#dc7093" fill-opacity="0.4"/><rect x="125.56" y="0" width="1.86" height="9" fill="#dc7093" fill-opacity="0.7"/></svg>
<div class="m" style="position:absolute;right:773.00px;top:217.24px;font-family:'Liberation Mono', monospace;font-size:7.25px;line-height:7.25px;font-weight:400;color:#8a8a8a;white-space:pre;">8.4%</div>
<div style="position:absolute;left:33px;top:224.3px;width:95px;height:8.7px;background:#ececec;"></div>
<svg style="position:absolute;left:0;top:224.3px;overflow:visible" width="805" height="9"><rect x="76.86" y="0" width="5.10" height="9" fill="#dc7093" fill-opacity="1"/><rect x="81.96" y="0" width="1.86" height="9" fill="#dc7093" fill-opacity="0.55"/><rect x="83.81" y="0" width="7.42" height="9" fill="#dc7093" fill-opacity="1"/><rect x="91.23" y="0" width="1.39" height="9" fill="#dc7093" fill-opacity="0.55"/><rect x="92.63" y="0" width="34.79" height="9" fill="#dc7093" fill-opacity="1"/></svg>
<div class="m" style="position:absolute;right:773.00px;top:226.71px;font-family:'Liberation Mono', monospace;font-size:7.25px;line-height:7.25px;font-weight:400;color:#8a8a8a;white-space:pre;">26.0%</div>
<div style="position:absolute;left:33px;top:233.8px;width:95px;height:9px;background:#ececec;"></div>
<svg style="position:absolute;left:0;top:233.8px;overflow:visible" width="805" height="9"><rect x="76.86" y="0" width="2.32" height="9" fill="#dc7093" fill-opacity="0.9"/><rect x="80.10" y="0" width="1.39" height="9" fill="#dc7093" fill-opacity="0.9"/><rect x="81.49" y="0" width="0.93" height="9" fill="#dc7093" fill-opacity="0.4"/><rect x="82.42" y="0" width="1.86" height="9" fill="#dc7093" fill-opacity="0.5"/><rect x="85.20" y="0" width="1.39" height="9" fill="#dc7093" fill-opacity="0.8"/><rect x="86.60" y="0" width="2.32" height="9" fill="#dc7093" fill-opacity="0.4"/><rect x="88.91" y="0" width="2.32" height="9" fill="#dc7093" fill-opacity="0.9"/><rect x="92.16" y="0" width="1.86" height="9" fill="#dc7093" fill-opacity="0.9"/><rect x="94.02" y="0" width="2.32" height="9" fill="#dc7093" fill-opacity="0.4"/><rect x="96.34" y="0" width="2.78" height="9" fill="#dc7093" fill-opacity="0.9"/><rect x="100.05" y="0" width="1.39" height="9" fill="#dc7093" fill-opacity="0.8"/><rect x="102.83" y="0" width="2.78" height="9" fill="#dc7093" fill-opacity="0.9"/><rect x="105.61" y="0" width="2.32" height="9" fill="#dc7093" fill-opacity="0.4"/><rect x="107.93" y="0" width="1.39" height="9" fill="#dc7093" fill-opacity="0.9"/><rect x="110.25" y="0" width="2.78" height="9" fill="#dc7093" fill-opacity="0.9"/><rect x="113.96" y="0" width="3.25" height="9" fill="#dc7093" fill-opacity="0.9"/><rect x="118.14" y="0" width="1.39" height="9" fill="#dc7093" fill-opacity="0.6"/><rect x="119.53" y="0" width="4.17" height="9" fill="#dc7093" fill-opacity="0.9"/><rect x="125.09" y="0" width="2.32" height="9" fill="#dc7093" fill-opacity="0.9"/></svg>
<div class="m" style="position:absolute;right:773.00px;top:236.18px;font-family:'Liberation Mono', monospace;font-size:7.25px;line-height:7.25px;font-weight:400;color:#8a8a8a;white-space:pre;">14.4%</div>
<div class="m" style="position:absolute;right:662.50px;top:169.29px;font-family:'Liberation Mono', monospace;font-size:7.25px;line-height:7.25px;font-weight:400;color:#9a9a9a;white-space:pre;">49</div>
<div class="m" style="position:absolute;right:662.50px;top:178.76px;font-family:'Liberation Mono', monospace;font-size:7.25px;line-height:7.25px;font-weight:400;color:#9a9a9a;white-space:pre;">50</div>
<div class="m" style="position:absolute;right:662.50px;top:188.23px;font-family:'Liberation Mono', monospace;font-size:7.25px;line-height:7.25px;font-weight:400;color:#9a9a9a;white-space:pre;">51</div>
<div class="m" style="position:absolute;right:662.50px;top:197.70px;font-family:'Liberation Mono', monospace;font-size:7.25px;line-height:7.25px;font-weight:400;color:#9a9a9a;white-space:pre;">52</div>
<div class="m" style="position:absolute;right:662.50px;top:207.17px;font-family:'Liberation Mono', monospace;font-size:7.25px;line-height:7.25px;font-weight:400;color:#9a9a9a;white-space:pre;">53</div>
<div class="m" style="position:absolute;right:662.50px;top:216.64px;font-family:'Liberation Mono', monospace;font-size:7.25px;line-height:7.25px;font-weight:400;color:#9a9a9a;white-space:pre;">54</div>
<div class="m" style="position:absolute;right:662.50px;top:226.11px;font-family:'Liberation Mono', monospace;font-size:7.25px;line-height:7.25px;font-weight:700;color:#555;white-space:pre;">55</div>
<div class="m" style="position:absolute;right:662.50px;top:235.58px;font-family:'Liberation Mono', monospace;font-size:7.25px;line-height:7.25px;font-weight:400;color:#9a9a9a;white-space:pre;">56</div>
<div class="m" style="position:absolute;right:662.50px;top:245.05px;font-family:'Liberation Mono', monospace;font-size:7.25px;line-height:7.25px;font-weight:400;color:#9a9a9a;white-space:pre;">57</div>
<div class="m" style="position:absolute;right:662.50px;top:254.52px;font-family:'Liberation Mono', monospace;font-size:7.25px;line-height:7.25px;font-weight:400;color:#9a9a9a;white-space:pre;">58</div>
<div class="m" style="position:absolute;right:662.50px;top:263.99px;font-family:'Liberation Mono', monospace;font-size:7.25px;line-height:7.25px;font-weight:400;color:#9a9a9a;white-space:pre;">59</div>
<div class="m" style="position:absolute;right:662.50px;top:273.46px;font-family:'Liberation Mono', monospace;font-size:7.25px;line-height:7.25px;font-weight:400;color:#9a9a9a;white-space:pre;">60</div>
<div class="m" style="position:absolute;right:662.50px;top:282.93px;font-family:'Liberation Mono', monospace;font-size:7.25px;line-height:7.25px;font-weight:400;color:#9a9a9a;white-space:pre;">61</div>
<div class="m" style="position:absolute;right:662.50px;top:292.40px;font-family:'Liberation Mono', monospace;font-size:7.25px;line-height:7.25px;font-weight:400;color:#9a9a9a;white-space:pre;">62</div>
<div class="m" style="position:absolute;right:662.50px;top:301.87px;font-family:'Liberation Mono', monospace;font-size:7.25px;line-height:7.25px;font-weight:400;color:#9a9a9a;white-space:pre;">63</div>
<div style="position:absolute;left:154px;top:223px;width:500.3px;height:2px;background:#a9a9a9;"></div>
<div style="position:absolute;left:154px;top:232px;width:500.3px;height:2px;background:#a9a9a9;"></div>
<div class="m" style="position:absolute;left:157.00px;top:169.29px;font-family:'Liberation Mono', monospace;font-size:7.25px;line-height:7.25px;font-weight:400;color:#1e1e1e;white-space:pre;"><span style="color:#1f8f1f;">    seconds using Python.</span></div>
<div class="m" style="position:absolute;left:157.00px;top:178.76px;font-family:'Liberation Mono', monospace;font-size:7.25px;line-height:7.25px;font-weight:400;color:#1e1e1e;white-space:pre;"><span style="color:#1f8f1f;">    &quot;&quot;&quot;</span></div>
<div class="m" style="position:absolute;left:157.00px;top:188.23px;font-family:'Liberation Mono', monospace;font-size:7.25px;line-height:7.25px;font-weight:400;color:#1e1e1e;white-space:pre;">    start_time <span style="color:#4a4af0;">=</span> time.time()</div>
<div class="m" style="position:absolute;left:157.00px;top:197.70px;font-family:'Liberation Mono', monospace;font-size:7.25px;line-height:7.25px;font-weight:400;color:#1e1e1e;white-space:pre;">    iterations <span style="color:#4a4af0;">=</span> <span style="color:#30309a;">0</span></div>
<div class="m" style="position:absolute;left:157.00px;top:207.17px;font-family:'Liberation Mono', monospace;font-size:7.25px;line-height:7.25px;font-weight:400;color:#1e1e1e;white-space:pre;">    <span style="color:#858522;">while</span> time.time() <span style="color:#4a4af0;">-</span> start_time <span style="color:#4a4af0;">&lt;</span> time_seconds:</div>
<div class="m" style="position:absolute;left:157.00px;top:216.64px;font-family:'Liberation Mono', monospace;font-size:7.25px;line-height:7.25px;font-weight:400;color:#1e1e1e;white-space:pre;">        <span style="color:#858522;">for</span> p <span style="color:#858522;">in</span> <span style="color:#858522;">range</span>(<span style="color:#30309a;">0</span>, <span style="color:#30309a;">30</span>):</div>
<div class="m" style="position:absolute;left:157.00px;top:226.11px;font-family:'Liberation Mono', monospace;font-size:7.25px;line-height:7.25px;font-weight:400;color:#1e1e1e;white-space:pre;">            x <span style="color:#4a4af0;">=</span> r<span style="color:#4a4af0;">*</span>x<span style="color:#4a4af0;">*</span>(<span style="color:#30309a;">1.0</span><span style="color:#4a4af0;">-</span>x)</div>
<div class="m" style="position:absolute;left:157.00px;top:235.58px;font-family:'Liberation Mono', monospace;font-size:7.25px;line-height:7.25px;font-weight:400;color:#1e1e1e;white-space:pre;">            iterations <span style="color:#4a4af0;">+=</span> <span style="color:#30309a;">1</span></div>
<div class="m" style="position:absolute;left:157.00px;top:245.05px;font-family:'Liberation Mono', monospace;font-size:7.25px;line-height:7.25px;font-weight:400;color:#1e1e1e;white-space:pre;">    <span style="color:#858522;">return</span> iterations</div>
<div class="m" style="position:absolute;left:157.00px;top:254.52px;font-family:'Liberation Mono', monospace;font-size:7.25px;line-height:7.25px;font-weight:400;color:#1e1e1e;white-space:pre;"></div>
<div class="m" style="position:absolute;left:157.00px;top:263.99px;font-family:'Liberation Mono', monospace;font-size:7.25px;line-height:7.25px;font-weight:400;color:#1e1e1e;white-space:pre;"><span style="color:#858522;">def</span> main():</div>
<div class="m" style="position:absolute;left:157.00px;top:273.46px;font-family:'Liberation Mono', monospace;font-size:7.25px;line-height:7.25px;font-weight:400;color:#1e1e1e;white-space:pre;">    parser <span style="color:#4a4af0;">=</span> argparse.ArgumentParser(</div>
<div class="m" style="position:absolute;left:157.00px;top:282.93px;font-family:'Liberation Mono', monospace;font-size:7.25px;line-height:7.25px;font-weight:400;color:#1e1e1e;white-space:pre;">        description<span style="color:#4a4af0;">=</span><span style="color:#1f8f1f;">&quot;Compare C and Python computation by either perfoming logistic map &quot;</span></div>
<div class="m" style="position:absolute;left:157.00px;top:292.40px;font-family:'Liberation Mono', monospace;font-size:7.25px;line-height:7.25px;font-weight:400;color:#1e1e1e;white-space:pre;"><span style="color:#1f8f1f;">                    &quot;calculations for a fixed duration or by computing a Fibonacci number.&quot;</span>)</div>
<div class="m" style="position:absolute;left:157.00px;top:301.87px;font-family:'Liberation Mono', monospace;font-size:7.25px;line-height:7.25px;font-weight:400;color:#1e1e1e;white-space:pre;">    group <span style="color:#4a4af0;">=</span> parser.add_mutually_exclusive_group()</div>
<div style="position:absolute;left:654.3px;top:166px;width:7.6px;height:142.5px;background:#dcdcdc;"></div>
<div style="position:absolute;left:654.3px;top:166px;width:1px;height:142.5px;background:#e6e6e6;"></div>
<div style="position:absolute;left:655.3px;top:166px;width:6.6px;height:8px;background:#f8f8f8;"></div>
<div style="position:absolute;left:655.3px;top:174px;width:6.6px;height:1px;background:#d0d0d0;"></div>
<div style="position:absolute;left:654.3px;top:248px;width:7.6px;height:21.2px;background:#f7f7f7;"></div>
<div style="position:absolute;left:654.3px;top:302px;width:7.6px;height:6.5px;background:#f4f4f4;"></div>
<svg style="position:absolute;left:653.9px;top:167.2px" width="8" height="6"><polygon points="1.9,4.1 6.1,4.1 4,1.9" fill="#333"/></svg>
<svg style="position:absolute;left:653.9px;top:301.8px" width="8" height="6"><polygon points="1.9,1.9 6.1,1.9 4,4.1" fill="#333"/></svg>
<div class="s" style="position:absolute;left:667.80px;top:151.88px;font-family:'Liberation Sans', sans-serif;font-size:6.97px;line-height:6.97px;font-weight:400;color:#1a1a1a;white-space:pre;"><span style=";letter-spacing:0.298px;">Time spent on line 55</span></div>
<div style="position:absolute;left:665.5px;top:159.6px;width:132px;height:150px;box-sizing:border-box;border:1px solid #c4c4c4;border-right:none;border-bottom:none;background:#efefef"></div>
<svg style="position:absolute;left:789.8px;top:151px" width="15" height="7"><rect x="0" y="0" width="6.2" height="6" rx="0.6" fill="#adadad"/><circle cx="1.6" cy="1.5" r="0.7" fill="#fff"/><circle cx="2.6" cy="3.4" r="0.7" fill="#fff"/><circle cx="4.6" cy="4.4" r="0.7" fill="#fff"/><rect x="8" y="0" width="6" height="6" rx="0.6" fill="#adadad"/><path d="M9.3,1.2 L12.7,4.8 M12.7,1.2 L9.3,4.8" stroke="#444" stroke-width="0.9"/></svg>
<div style="position:absolute;left:796.7px;top:160px;width:7.2px;height:150px;background:#f5f5f5;border-left:1px solid #dcdcdc;box-sizing:border-box"></div>
<div style="position:absolute;left:796.7px;top:272px;width:7.2px;height:33px;background:#d6d6d6;"></div>
<svg style="position:absolute;left:796.4px;top:160.6px" width="8" height="6"><polygon points="1.9,4.1 6.1,4.1 4,1.9" fill="#333"/></svg>
<svg style="position:absolute;left:796.4px;top:303.2px" width="8" height="6"><polygon points="1.9,1.9 6.1,1.9 4,4.1" fill="#333"/></svg>
<div class="b" style="position:absolute;left:671.00px;top:166.88px;font-family:'Liberation Sans', sans-serif;font-size:6.97px;line-height:6.97px;font-weight:700;color:#111;white-space:pre;"><span style=";letter-spacing:0.574px;">Breakdown of the 26.0% time</span></div>
<div class="b" style="position:absolute;left:671.00px;top:174.58px;font-family:'Liberation Sans', sans-serif;font-size:6.97px;line-height:6.97px;font-weight:700;color:#111;white-space:pre;"><span style=";letter-spacing:0.468px;">spent on this line:</span></div>
<div class="s" style="position:absolute;left:672.70px;top:188.08px;font-family:'Liberation Sans', sans-serif;font-size:6.97px;line-height:6.97px;font-weight:400;color:#222;white-space:pre;"><span style=";letter-spacing:0.301px;">Executing instructions</span></div>
<div class="s" style="position:absolute;right:26.00px;top:188.08px;font-family:'Liberation Sans', sans-serif;font-size:6.97px;line-height:6.97px;font-weight:400;color:#9a9a9a;white-space:pre;"><span style=";letter-spacing:0.318px;">100.0%</span></div>
<div style="position:absolute;left:781px;top:187.3px;width:14.3px;height:5.4px;background:#808080;"></div>
<div class="s" style="position:absolute;left:672.70px;top:198.88px;font-family:'Liberation Sans', sans-serif;font-size:6.97px;line-height:6.97px;font-weight:400;color:#222;white-space:pre;"><span style=";letter-spacing:0.278px;">Calling functions</span></div>
<div class="s" style="position:absolute;right:26.00px;top:198.88px;font-family:'Liberation Sans', sans-serif;font-size:6.97px;line-height:6.97px;font-weight:400;color:#9a9a9a;white-space:pre;"><span style=";letter-spacing:0.285px;">0.0%</span></div>
<div class="b" style="position:absolute;left:671.00px;top:212.18px;font-family:'Liberation Sans', sans-serif;font-size:6.97px;line-height:6.97px;font-weight:700;color:#111;white-space:pre;"><span style=";letter-spacing:0.482px;">Time in instructions executed:</span></div>
<div class="s" style="position:absolute;left:672.70px;top:225.48px;font-family:'Liberation Sans', sans-serif;font-size:6.97px;line-height:6.97px;font-weight:400;color:#222;white-space:pre;"><span style=";letter-spacing:0.296px;">Scalar floating-point</span></div>
<div class="s" style="position:absolute;right:26.00px;top:225.48px;font-family:'Liberation Sans', sans-serif;font-size:6.97px;line-height:6.97px;font-weight:400;color:#4a9a4a;white-space:pre;"><span style=";letter-spacing:0.285px;">0.4%</span></div>
<div class="s" style="position:absolute;left:672.70px;top:236.48px;font-family:'Liberation Sans', sans-serif;font-size:6.97px;line-height:6.97px;font-weight:400;color:#222;white-space:pre;"><span style=";letter-spacing:0.324px;">Vector floating-point</span></div>
<div class="s" style="position:absolute;right:26.00px;top:236.48px;font-family:'Liberation Sans', sans-serif;font-size:6.97px;line-height:6.97px;font-weight:400;color:#8ccc8c;white-space:pre;"><span style=";letter-spacing:0.285px;">0.0%</span></div>
<div class="s" style="position:absolute;left:672.70px;top:247.78px;font-family:'Liberation Sans', sans-serif;font-size:6.97px;line-height:6.97px;font-weight:400;color:#222;white-space:pre;"><span style=";letter-spacing:0.278px;">Scalar integer</span></div>
<div class="s" style="position:absolute;right:26.00px;top:247.78px;font-family:'Liberation Sans', sans-serif;font-size:6.97px;line-height:6.97px;font-weight:400;color:#4a9a4a;white-space:pre;"><span style=";letter-spacing:0.306px;">23.1%</span></div>
<div style="position:absolute;left:781px;top:247.0px;width:3px;height:5.4px;background:#3f8f3f;"></div>
<div class="s" style="position:absolute;left:672.70px;top:258.88px;font-family:'Liberation Sans', sans-serif;font-size:6.97px;line-height:6.97px;font-weight:400;color:#222;white-space:pre;"><span style=";letter-spacing:0.320px;">Vector integer</span></div>
<div class="s" style="position:absolute;right:26.00px;top:258.88px;font-family:'Liberation Sans', sans-serif;font-size:6.97px;line-height:6.97px;font-weight:400;color:#8ccc8c;white-space:pre;"><span style=";letter-spacing:0.285px;">0.0%</span></div>
<div class="s" style="position:absolute;left:672.70px;top:270.18px;font-family:'Liberation Sans', sans-serif;font-size:6.97px;line-height:6.97px;font-weight:400;color:#222;white-space:pre;"><span style=";letter-spacing:0.272px;">Memory access*</span></div>
<div class="s" style="position:absolute;right:26.00px;top:270.18px;font-family:'Liberation Sans', sans-serif;font-size:6.97px;line-height:6.97px;font-weight:400;color:#e06060;white-space:pre;"><span style=";letter-spacing:0.306px;">66.9%</span></div>
<div style="position:absolute;left:781px;top:269.40000000000003px;width:9.6px;height:5.4px;background:#e56f6f;"></div>
<div class="s" style="position:absolute;left:672.70px;top:281.28px;font-family:'Liberation Sans', sans-serif;font-size:6.97px;line-height:6.97px;font-weight:400;color:#222;white-space:pre;"><span style=";letter-spacing:0.260px;">Branch</span></div>
<div class="s" style="position:absolute;right:26.00px;top:281.28px;font-family:'Liberation Sans', sans-serif;font-size:6.97px;line-height:6.97px;font-weight:400;color:#f0a0a0;white-space:pre;"><span style=";letter-spacing:0.306px;">37.3%</span></div>
<div style="position:absolute;left:781px;top:280.5px;width:6px;height:5.4px;background:#f2a8a8;"></div>
<div class="s" style="position:absolute;left:672.70px;top:292.28px;font-family:'Liberation Sans', sans-serif;font-size:6.97px;line-height:6.97px;font-weight:400;color:#222;white-space:pre;"><span style=";letter-spacing:0.321px;">Other instructions</span></div>
<div class="s" style="position:absolute;right:26.00px;top:292.28px;font-family:'Liberation Sans', sans-serif;font-size:6.97px;line-height:6.97px;font-weight:400;color:#a0a0a0;white-space:pre;"><span style=";letter-spacing:0.306px;">10.4%</span></div>
<div style="position:absolute;left:781px;top:291.5px;width:1.5px;height:5.4px;background:#8a8a8a;"></div>
<div style="position:absolute;left:666.5px;top:304px;width:130px;height:5.5px;overflow:hidden"><div style="position:absolute;left:4.5px;top:0.6px;font-family:'Liberation Sans';font-size:6.7px;line-height:6.7px;color:#222;white-space:pre;letter-spacing:0.55px">* 28.8% memory access</div></div>
<div style="position:absolute;left:0px;top:310px;width:805px;height:1px;background:#d4d4d4;"></div>
<div style="position:absolute;left:0;top:315.2px;width:56px;height:12.6px;box-sizing:border-box;border:1px solid #c8c8c8;border-bottom:none;background:#e2e2e2;border-radius:2px 2px 0 0"></div>
<div style="position:absolute;left:56px;top:315.2px;width:54.5px;height:12.6px;box-sizing:border-box;border:1px solid #c8c8c8;border-left:none;border-bottom:none;background:#e2e2e2;border-radius:2px 2px 0 0"></div>
<div style="position:absolute;left:110.5px;top:313.7px;width:79px;height:14px;box-sizing:border-box;border:1px solid #c8c8c8;border-bottom:none;background:#f7f7f7;border-radius:2px 2px 0 0"></div>
<div style="position:absolute;left:189.4px;top:315.2px;width:45.9px;height:12.6px;box-sizing:border-box;border:1px solid #c8c8c8;border-left:none;border-bottom:none;background:#e2e2e2;border-radius:2px 2px 0 0"></div>
<div style="position:absolute;left:235.3px;top:315.2px;width:42.4px;height:12.6px;box-sizing:border-box;border:1px solid #c8c8c8;border-left:none;border-bottom:none;background:#e2e2e2;border-radius:2px 2px 0 0"></div>
<div style="position:absolute;left:0px;top:327.3px;width:110.5px;height:1px;background:#c8c8c8;"></div>
<div style="position:absolute;left:189.4px;top:327.3px;width:615.6px;height:1px;background:#c8c8c8;"></div>
<div class="s" style="position:absolute;left:6.60px;top:319.58px;font-family:'Liberation Sans', sans-serif;font-size:6.97px;line-height:6.97px;font-weight:400;color:#1a1a1a;white-space:pre;"><span style=";letter-spacing:0.378px;">Input/Output</span></div>
<div class="s" style="position:absolute;left:63.50px;top:319.58px;font-family:'Liberation Sans', sans-serif;font-size:6.97px;line-height:6.97px;font-weight:400;color:#1a1a1a;white-space:pre;"><span style=";letter-spacing:0.109px;">Project Files</span></div>
<div class="s" style="position:absolute;left:116.50px;top:319.28px;font-family:'Liberation Sans', sans-serif;font-size:6.97px;line-height:6.97px;font-weight:400;color:#1a1a1a;white-space:pre;"><span style=";letter-spacing:0.216px;">Main Thread Stacks</span></div>
<div class="s" style="position:absolute;left:196.50px;top:319.58px;font-family:'Liberation Sans', sans-serif;font-size:6.97px;line-height:6.97px;font-weight:400;color:#1a1a1a;white-space:pre;"><span style=";letter-spacing:0.198px;">Functions</span></div>
<div class="s" style="position:absolute;left:242.20px;top:319.58px;font-family:'Liberation Sans', sans-serif;font-size:6.97px;line-height:6.97px;font-weight:400;color:#1a1a1a;white-space:pre;"><span style=";letter-spacing:0.247px;">Libraries</span></div>
<div class="s" style="position:absolute;left:2.60px;top:331.88px;font-family:'Liberation Sans', sans-serif;font-size:6.97px;line-height:6.97px;font-weight:400;color:#1a1a1a;white-space:pre;"><span style=";letter-spacing:0.216px;">Main Thread Stacks</span></div>
<svg style="position:absolute;left:789.8px;top:331px" width="15" height="7"><rect x="0" y="0" width="6.2" height="6" rx="0.6" fill="#adadad"/><circle cx="1.6" cy="1.5" r="0.7" fill="#fff"/><circle cx="2.6" cy="3.4" r="0.7" fill="#fff"/><circle cx="4.6" cy="4.4" r="0.7" fill="#fff"/><rect x="8" y="0" width="6" height="6" rx="0.6" fill="#adadad"/><path d="M9.3,1.2 L12.7,4.8 M12.7,1.2 L9.3,4.8" stroke="#444" stroke-width="0.9"/></svg>
<div style="position:absolute;left:0.5px;top:339.4px;width:796.5px;height:101.9px;background:#fff;border:1px solid #c8c8c8;box-sizing:border-box"></div>
<div style="position:absolute;left:1px;top:340.2px;width:795.5px;height:10.3px;background:#f0f0f0;background:linear-gradient(#f7f7f7,#ececec)"></div>
<div style="position:absolute;left:1px;top:350.5px;width:795.5px;height:0.8px;background:#c8c8c8;"></div>
<div style="position:absolute;left:127.3px;top:341px;width:0.8px;height:9.5px;background:#cfcfcf;"></div>
<div style="position:absolute;left:156.3px;top:341px;width:0.8px;height:9.5px;background:#cfcfcf;"></div>
<div style="position:absolute;left:314.9px;top:341px;width:0.8px;height:9.5px;background:#cfcfcf;"></div>
<div style="position:absolute;left:600.5px;top:341px;width:0.8px;height:9.5px;background:#cfcfcf;"></div>
<div style="position:absolute;left:705.5px;top:341px;width:0.8px;height:9.5px;background:#cfcfcf;"></div>
<div class="s" style="position:absolute;left:1.70px;top:342.38px;font-family:'Liberation Sans', sans-serif;font-size:6.97px;line-height:6.97px;font-weight:400;color:#1a1a1a;white-space:pre;"><span style=";letter-spacing:0.283px;">Total core time</span></div>
<svg style="position:absolute;left:118.6px;top:341.6px" width="8" height="6"><polygon points="1.9,4.1 6.1,4.1 4,1.9" fill="#444"/></svg>
<div class="s" style="position:absolute;left:129.00px;top:342.38px;font-family:'Liberation Sans', sans-serif;font-size:6.97px;line-height:6.97px;font-weight:400;color:#1a1a1a;white-space:pre;"><span style=";letter-spacing:-0.198px;">MPI</span></div>
<div class="s" style="position:absolute;left:157.50px;top:342.38px;font-family:'Liberation Sans', sans-serif;font-size:6.97px;line-height:6.97px;font-weight:400;color:#1a1a1a;white-space:pre;"><span style=";letter-spacing:0.242px;">Function(s) on line</span></div>
<div class="s" style="position:absolute;left:316.00px;top:342.38px;font-family:'Liberation Sans', sans-serif;font-size:6.97px;line-height:6.97px;font-weight:400;color:#1a1a1a;white-space:pre;"><span style=";letter-spacing:0.156px;">Source</span></div>
<div class="s" style="position:absolute;left:601.80px;top:342.38px;font-family:'Liberation Sans', sans-serif;font-size:6.97px;line-height:6.97px;font-weight:400;color:#1a1a1a;white-space:pre;"><span style=";letter-spacing:0.162px;">Position</span></div>
<div class="s" style="position:absolute;left:706.80px;top:342.38px;font-family:'Liberation Sans', sans-serif;font-size:6.97px;line-height:6.97px;font-weight:400;color:#1a1a1a;white-space:pre;"><span style=";letter-spacing:0.304px;">Library</span></div>
<div style="position:absolute;left:796.5px;top:340px;width:8.5px;height:101px;background:#f5f5f5;border-left:1px solid #dcdcdc;box-sizing:border-box"></div>
<div style="position:absolute;left:797.5px;top:423px;width:7px;height:10px;background:#d6d6d6;"></div>
<svg style="position:absolute;left:796.6px;top:341.0px" width="8" height="6"><polygon points="1.9,4.1 6.1,4.1 4,1.9" fill="#333"/></svg>
<svg style="position:absolute;left:796.8px;top:433.0px" width="8" height="6"><polygon points="1.9,1.9 6.1,1.9 4,4.1" fill="#333"/></svg>
<div style="position:absolute;left:1px;top:391px;width:795.5px;height:10px;background:#308cc6;"></div>
<svg style="position:absolute;left:156.3px;top:353.4px" width="6" height="5"><polygon points="0.9,1 5.1,1 3,3.6" fill="#333"/></svg>
<svg style="position:absolute;left:164px;top:352px" width="9" height="9"><g transform="rotate(25 4.5 4.5)"><rect x="1.3" y="1.3" width="6.4" height="6.4" rx="1.4" fill="#f0561a"/><rect x="2.2" y="2.4" width="2" height="2" fill="#fbe0d6"/><rect x="4.8" y="4.6" width="2" height="2" fill="#fbe0d6"/></g></svg>
<div class="s" style="position:absolute;left:176.40px;top:353.38px;font-family:'Liberation Sans', sans-serif;font-size:6.97px;line-height:6.97px;font-weight:400;color:#1a1a1a;white-space:pre;"><span style=";letter-spacing:0.418px;">python3 [program]</span></div>
<svg style="position:absolute;left:162px;top:363.2px" width="6" height="5"><polygon points="0.9,1 5.1,1 3,3.6" fill="#333"/></svg>
<svg style="position:absolute;left:170px;top:361px" width="8" height="10"><path d="M1,8.5 L6.8,1.1" stroke="#9cc4cc" stroke-width="1.2"/><ellipse cx="4" cy="4.8" rx="1.1" ry="1.7" transform="rotate(38 4 4.8)" fill="#f0960a"/></svg>
<div class="s" style="position:absolute;left:182.00px;top:363.38px;font-family:'Liberation Sans', sans-serif;font-size:6.97px;line-height:6.97px;font-weight:400;color:#1a1a1a;white-space:pre;"><span style=";letter-spacing:0.351px;">python-profiling.py</span></div>
<svg style="position:absolute;left:167.6px;top:373.2px" width="6" height="5"><polygon points="0.9,1 5.1,1 3,3.6" fill="#333"/></svg>
<div class="s" style="position:absolute;left:174.60px;top:373.38px;font-family:'Liberation Sans', sans-serif;font-size:6.97px;line-height:6.97px;font-weight:400;color:#e0709a;white-space:pre;"><span style=";letter-spacing:0.410px;">main</span></div>
<svg style="position:absolute;left:173.2px;top:383.2px" width="6" height="5"><polygon points="0.9,1 5.1,1 3,3.6" fill="#333"/></svg>
<div class="s" style="position:absolute;left:180.60px;top:383.38px;font-family:'Liberation Sans', sans-serif;font-size:6.97px;line-height:6.97px;font-weight:400;color:#e0709a;white-space:pre;"><span style=";letter-spacing:0.276px;">logistic_map_python</span></div>
<svg style="position:absolute;left:173.7px;top:433px" width="5" height="6"><polygon points="1,0.9 3.6,3 1,5.1" fill="#333"/></svg>
<div class="s" style="position:absolute;left:180.60px;top:433.38px;font-family:'Liberation Sans', sans-serif;font-size:6.97px;line-height:6.97px;font-weight:400;color:#e0709a;white-space:pre;"><span style=";letter-spacing:0.209px;">logistic_map_c</span></div>
<div class="m" style="position:absolute;left:316.70px;top:363.79px;font-family:'Liberation Mono', monospace;font-size:7.25px;line-height:7.25px;font-weight:400;color:#1e1e1e;white-space:pre;">#!/usr/bin/env python</div>
<div class="s" style="position:absolute;left:602.00px;top:363.38px;font-family:'Liberation Sans', sans-serif;font-size:6.97px;line-height:6.97px;font-weight:400;color:#1e1e1e;white-space:pre;"><span style=";letter-spacing:0.328px;">python-profiling.py:1</span></div>
<div class="m" style="position:absolute;left:316.70px;top:373.79px;font-family:'Liberation Mono', monospace;font-size:7.25px;line-height:7.25px;font-weight:400;color:#1e1e1e;white-space:pre;">main()</div>
<div class="s" style="position:absolute;left:602.00px;top:373.38px;font-family:'Liberation Sans', sans-serif;font-size:6.97px;line-height:6.97px;font-weight:400;color:#1e1e1e;white-space:pre;"><span style=";letter-spacing:0.331px;">python-profiling.py:82</span></div>
<div class="s" style="position:absolute;left:707.70px;top:373.38px;font-family:'Liberation Sans', sans-serif;font-size:6.97px;line-height:6.97px;font-weight:400;color:#1e1e1e;white-space:pre;"><span style=";letter-spacing:0.405px;">[python script]</span></div>
<div class="m" style="position:absolute;left:316.70px;top:383.79px;font-family:'Liberation Mono', monospace;font-size:7.25px;line-height:7.25px;font-weight:400;color:#1e1e1e;white-space:pre;">print(&quot; %s iterations computed in Python&quot; % logistic_map_python…</div>
<div class="s" style="position:absolute;left:602.00px;top:383.38px;font-family:'Liberation Sans', sans-serif;font-size:6.97px;line-height:6.97px;font-weight:400;color:#1e1e1e;white-space:pre;"><span style=";letter-spacing:0.331px;">python-profiling.py:79</span></div>
<div class="s" style="position:absolute;left:707.70px;top:383.38px;font-family:'Liberation Sans', sans-serif;font-size:6.97px;line-height:6.97px;font-weight:400;color:#1e1e1e;white-space:pre;"><span style=";letter-spacing:0.405px;">[python script]</span></div>
<div class="m" style="position:absolute;left:316.70px;top:393.79px;font-family:'Liberation Mono', monospace;font-size:7.25px;line-height:7.25px;font-weight:400;color:#eaf2fa;white-space:pre;">x = r*x*(1.0-x)</div>
<div class="s" style="position:absolute;left:602.00px;top:393.38px;font-family:'Liberation Sans', sans-serif;font-size:6.97px;line-height:6.97px;font-weight:400;color:#d8e8f6;white-space:pre;"><span style=";letter-spacing:0.331px;">python-profiling.py:55</span></div>
<div class="s" style="position:absolute;left:707.70px;top:393.38px;font-family:'Liberation Sans', sans-serif;font-size:6.97px;line-height:6.97px;font-weight:400;color:#d8e8f6;white-space:pre;"><span style=";letter-spacing:0.405px;">[python script]</span></div>
<div class="m" style="position:absolute;left:316.70px;top:403.79px;font-family:'Liberation Mono', monospace;font-size:7.25px;line-height:7.25px;font-weight:400;color:#1e1e1e;white-space:pre;">iterations += 1</div>
<div class="s" style="position:absolute;left:602.00px;top:403.38px;font-family:'Liberation Sans', sans-serif;font-size:6.97px;line-height:6.97px;font-weight:400;color:#1e1e1e;white-space:pre;"><span style=";letter-spacing:0.331px;">python-profiling.py:56</span></div>
<div class="s" style="position:absolute;left:707.70px;top:403.38px;font-family:'Liberation Sans', sans-serif;font-size:6.97px;line-height:6.97px;font-weight:400;color:#1e1e1e;white-space:pre;"><span style=";letter-spacing:0.405px;">[python script]</span></div>
<div class="m" style="position:absolute;left:316.70px;top:413.79px;font-family:'Liberation Mono', monospace;font-size:7.25px;line-height:7.25px;font-weight:400;color:#1e1e1e;white-space:pre;">for p in range(0, 30):</div>
<div class="s" style="position:absolute;left:602.00px;top:413.38px;font-family:'Liberation Sans', sans-serif;font-size:6.97px;line-height:6.97px;font-weight:400;color:#1e1e1e;white-space:pre;"><span style=";letter-spacing:0.331px;">python-profiling.py:54</span></div>
<div class="s" style="position:absolute;left:707.70px;top:413.38px;font-family:'Liberation Sans', sans-serif;font-size:6.97px;line-height:6.97px;font-weight:400;color:#1e1e1e;white-space:pre;"><span style=";letter-spacing:0.405px;">[python script]</span></div>
<div class="m" style="position:absolute;left:316.70px;top:423.79px;font-family:'Liberation Mono', monospace;font-size:7.25px;line-height:7.25px;font-weight:400;color:#1e1e1e;white-space:pre;">while time.time() - start_time &lt; time_seconds:</div>
<div class="s" style="position:absolute;left:602.00px;top:423.38px;font-family:'Liberation Sans', sans-serif;font-size:6.97px;line-height:6.97px;font-weight:400;color:#1e1e1e;white-space:pre;"><span style=";letter-spacing:0.331px;">python-profiling.py:53</span></div>
<div class="s" style="position:absolute;left:707.70px;top:423.38px;font-family:'Liberation Sans', sans-serif;font-size:6.97px;line-height:6.97px;font-weight:400;color:#1e1e1e;white-space:pre;"><span style=";letter-spacing:0.405px;">[python script]</span></div>
<div class="m" style="position:absolute;left:316.70px;top:433.79px;font-family:'Liberation Mono', monospace;font-size:7.25px;line-height:7.25px;font-weight:400;color:#1e1e1e;white-space:pre;">print(&quot; %s iterations computed in C&quot; % logistic_map_c(3.8, 0.5,…</div>
<div class="s" style="position:absolute;left:602.00px;top:433.38px;font-family:'Liberation Sans', sans-serif;font-size:6.97px;line-height:6.97px;font-weight:400;color:#1e1e1e;white-space:pre;"><span style=";letter-spacing:0.331px;">python-profiling.py:78</span></div>
<div class="s" style="position:absolute;left:707.70px;top:433.38px;font-family:'Liberation Sans', sans-serif;font-size:6.97px;line-height:6.97px;font-weight:400;color:#1e1e1e;white-space:pre;"><span style=";letter-spacing:0.405px;">[python script]</span></div>
<div class="s" style="position:absolute;right:774.00px;top:393.38px;font-family:'Liberation Sans', sans-serif;font-size:6.97px;line-height:6.97px;font-weight:400;color:#fff;white-space:pre;"><span style=";letter-spacing:0.306px;">26.0%</span></div>
<div style="position:absolute;left:32.2px;top:392px;width:94px;height:8.2px;background:#ececec;"></div>
<svg style="position:absolute;left:0;top:392px;overflow:visible" width="805" height="8.2"><rect x="76.56" y="0" width="2.39" height="8.2" fill="#dc7093" fill-opacity="1"/><rect x="79.55" y="0" width="2.03" height="8.2" fill="#dc7093" fill-opacity="1"/><rect x="82.29" y="0" width="43.79" height="8.2" fill="#dc7093" fill-opacity="1"/></svg>
<div class="s" style="position:absolute;right:774.00px;top:403.38px;font-family:'Liberation Sans', sans-serif;font-size:6.97px;line-height:6.97px;font-weight:400;color:#1e1e1e;white-space:pre;"><span style=";letter-spacing:0.306px;">14.4%</span></div>
<div style="position:absolute;left:32.2px;top:401.5px;width:94px;height:8.8px;background:#ececec;"></div>
<svg style="position:absolute;left:0;top:401.5px;overflow:visible" width="805" height="8.8"><rect x="76.56" y="0" width="1.55" height="8.8" fill="#dc7093" fill-opacity="0.9"/><rect x="78.11" y="0" width="1.43" height="8.8" fill="#dc7093" fill-opacity="0.3"/><rect x="79.55" y="0" width="1.43" height="8.8" fill="#dc7093" fill-opacity="0.5"/><rect x="80.98" y="0" width="8.11" height="8.8" fill="#dc7093" fill-opacity="0.9"/><rect x="89.09" y="0" width="1.79" height="8.8" fill="#dc7093" fill-opacity="0.4"/><rect x="90.88" y="0" width="2.39" height="8.8" fill="#dc7093" fill-opacity="0.9"/><rect x="93.27" y="0" width="1.79" height="8.8" fill="#dc7093" fill-opacity="0.3"/><rect x="95.06" y="0" width="2.98" height="8.8" fill="#dc7093" fill-opacity="0.5"/><rect x="98.04" y="0" width="1.79" height="8.8" fill="#dc7093" fill-opacity="0.3"/><rect x="99.83" y="0" width="4.18" height="8.8" fill="#dc7093" fill-opacity="0.9"/><rect x="104.01" y="0" width="1.19" height="8.8" fill="#dc7093" fill-opacity="0.3"/><rect x="105.20" y="0" width="1.19" height="8.8" fill="#dc7093" fill-opacity="0.9"/><rect x="106.40" y="0" width="1.19" height="8.8" fill="#dc7093" fill-opacity="0.3"/><rect x="107.59" y="0" width="4.18" height="8.8" fill="#dc7093" fill-opacity="0.9"/><rect x="111.77" y="0" width="1.19" height="8.8" fill="#dc7093" fill-opacity="0.3"/><rect x="112.96" y="0" width="2.98" height="8.8" fill="#dc7093" fill-opacity="0.9"/><rect x="115.94" y="0" width="1.19" height="8.8" fill="#dc7093" fill-opacity="0.3"/><rect x="117.14" y="0" width="1.19" height="8.8" fill="#dc7093" fill-opacity="0.9"/><rect x="118.33" y="0" width="4.18" height="8.8" fill="#dc7093" fill-opacity="0.8"/><rect x="122.51" y="0" width="1.79" height="8.8" fill="#dc7093" fill-opacity="0.3"/><rect x="124.30" y="0" width="1.79" height="8.8" fill="#dc7093" fill-opacity="0.9"/></svg>
<div class="s" style="position:absolute;right:774.00px;top:413.38px;font-family:'Liberation Sans', sans-serif;font-size:6.97px;line-height:6.97px;font-weight:400;color:#1e1e1e;white-space:pre;"><span style=";letter-spacing:0.285px;">8.4%</span></div>
<div style="position:absolute;left:32.2px;top:411.9px;width:94px;height:8.3px;background:#ececec;"></div>
<svg style="position:absolute;left:0;top:411.9px;overflow:visible" width="805" height="8.3"><rect x="76.56" y="0" width="0.84" height="8.3" fill="#dc7093" fill-opacity="0.6"/><rect x="77.40" y="0" width="2.74" height="8.3" fill="#dc7093" fill-opacity="0.9"/><rect x="80.14" y="0" width="1.19" height="8.3" fill="#dc7093" fill-opacity="0.4"/><rect x="81.34" y="0" width="2.39" height="8.3" fill="#dc7093" fill-opacity="0.9"/><rect x="84.92" y="0" width="2.98" height="8.3" fill="#dc7093" fill-opacity="0.9"/><rect x="89.09" y="0" width="1.79" height="8.3" fill="#dc7093" fill-opacity="0.5"/><rect x="90.88" y="0" width="1.79" height="8.3" fill="#dc7093" fill-opacity="0.3"/><rect x="92.67" y="0" width="1.79" height="8.3" fill="#dc7093" fill-opacity="0.9"/><rect x="96.25" y="0" width="2.39" height="8.3" fill="#dc7093" fill-opacity="0.9"/><rect x="98.64" y="0" width="1.79" height="8.3" fill="#dc7093" fill-opacity="0.4"/><rect x="100.43" y="0" width="2.98" height="8.3" fill="#dc7093" fill-opacity="0.9"/><rect x="103.41" y="0" width="1.79" height="8.3" fill="#dc7093" fill-opacity="0.3"/><rect x="105.20" y="0" width="2.98" height="8.3" fill="#dc7093" fill-opacity="0.8"/><rect x="108.19" y="0" width="1.79" height="8.3" fill="#dc7093" fill-opacity="0.9"/><rect x="109.98" y="0" width="1.79" height="8.3" fill="#dc7093" fill-opacity="0.3"/><rect x="111.77" y="0" width="2.98" height="8.3" fill="#dc7093" fill-opacity="0.7"/><rect x="114.75" y="0" width="2.39" height="8.3" fill="#dc7093" fill-opacity="0.9"/><rect x="117.14" y="0" width="4.18" height="8.3" fill="#dc7093" fill-opacity="0.5"/><rect x="121.31" y="0" width="1.79" height="8.3" fill="#dc7093" fill-opacity="0.3"/><rect x="123.10" y="0" width="2.98" height="8.3" fill="#dc7093" fill-opacity="0.9"/></svg>
<div class="s" style="position:absolute;right:774.00px;top:423.38px;font-family:'Liberation Sans', sans-serif;font-size:6.97px;line-height:6.97px;font-weight:400;color:#1e1e1e;white-space:pre;"><span style=";letter-spacing:0.285px;">4.1%</span></div>
<div style="position:absolute;left:32.2px;top:422px;width:94px;height:8.6px;background:#ececec;"></div>
<svg style="position:absolute;left:0;top:422px;overflow:visible" width="805" height="8.6"><rect x="76.56" y="0" width="1.19" height="8.6" fill="#dc7093" fill-opacity="0.7"/><rect x="79.31" y="0" width="1.67" height="8.6" fill="#dc7093" fill-opacity="0.9"/><rect x="82.17" y="0" width="1.55" height="8.6" fill="#dc7093" fill-opacity="0.7"/><rect x="83.72" y="0" width="1.79" height="8.6" fill="#dc7093" fill-opacity="0.9"/><rect x="85.51" y="0" width="1.19" height="8.6" fill="#dc7093" fill-opacity="0.3"/><rect x="88.85" y="0" width="2.03" height="8.6" fill="#dc7093" fill-opacity="0.9"/><rect x="90.88" y="0" width="2.39" height="8.6" fill="#dc7093" fill-opacity="0.8"/><rect x="97.68" y="0" width="1.19" height="8.6" fill="#dc7093" fill-opacity="0.9"/><rect x="99.83" y="0" width="1.43" height="8.6" fill="#dc7093" fill-opacity="0.5"/><rect x="102.82" y="0" width="1.79" height="8.6" fill="#dc7093" fill-opacity="0.8"/><rect x="105.80" y="0" width="5.37" height="8.6" fill="#dc7093" fill-opacity="0.5"/><rect x="113.91" y="0" width="1.19" height="8.6" fill="#dc7093" fill-opacity="0.6"/><rect x="115.94" y="0" width="1.19" height="8.6" fill="#dc7093" fill-opacity="0.6"/><rect x="120.72" y="0" width="2.39" height="8.6" fill="#dc7093" fill-opacity="0.9"/><rect x="123.10" y="0" width="2.98" height="8.6" fill="#dc7093" fill-opacity="0.5"/></svg>
<div class="s" style="position:absolute;right:774.00px;top:433.38px;font-family:'Liberation Sans', sans-serif;font-size:6.97px;line-height:6.97px;font-weight:400;color:#1e1e1e;white-space:pre;"><span style=";letter-spacing:0.306px;">47.1%</span></div>
<div style="position:absolute;left:32.2px;top:431.5px;width:94px;height:8.6px;background:#ececec;"></div>
<div style="position:absolute;left:32.2px;top:431.5px;width:44.7px;height:8.6px;background:#51944f;"></div>
<div class="s" style="position:absolute;left:3.60px;top:445.08px;font-family:'Liberation Sans', sans-serif;font-size:6.97px;line-height:6.97px;font-weight:400;color:#1a1a1a;white-space:pre;"><span style=";letter-spacing:0.299px;">Showing data from 1,000 samples taken over 1 process (1000 per process, each representing ~ 0.03s wallclock time)</span></div>
<div class="s" style="position:absolute;right:14.30px;top:444.48px;font-family:'Liberation Sans', sans-serif;font-size:6.97px;line-height:6.97px;font-weight:400;color:#bdbdbd;white-space:pre;"><span style=";letter-spacing:0.210px;">Linaro Forge 25.1</span></div>
</div></body></html>
